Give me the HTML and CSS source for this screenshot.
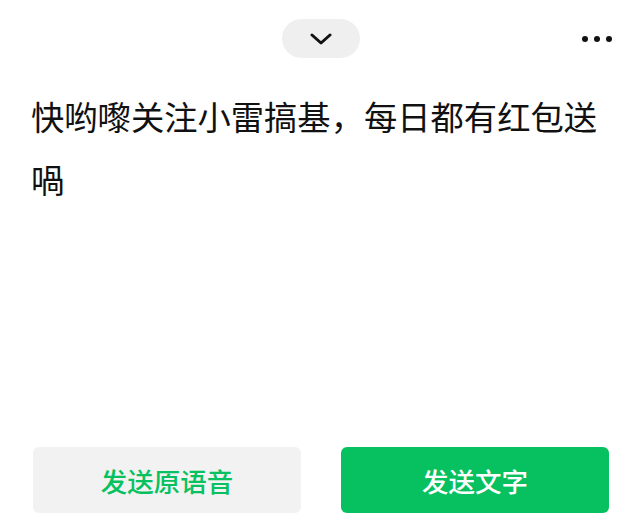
FILE: index.html
```html
<!DOCTYPE html>
<html lang="zh">
<head>
<meta charset="utf-8">
<link rel="stylesheet" href="styles.css">
</head>
<body>
<div class="page">
  <header class="top">
    <div class="spacer"></div>
    <button class="pill" aria-label="收起">
      <svg width="22" height="12" viewBox="0 0 22 12"><path d="M2 2 L11 10 L20 2" fill="none" stroke="#111" stroke-width="3" stroke-linecap="round" stroke-linejoin="round"/></svg>
    </button>
    <div class="more"><span class="dot"></span><span class="dot"></span><span class="dot"></span></div>
  </header>
  <main class="content">
    <p class="text">快哟嚟关注小雷搞基，每日都有红包送喎</p>
  </main>
  <footer class="actions">
    <button class="btn btn-grey">发送原语音</button>
    <button class="btn btn-green">发送文字</button>
  </footer>
</div>
</body>
</html>
```

FILE: styles.css
```css
html, body {
  margin: 0;
  padding: 0;
  background: #fff;
}
body {
  font-family: "Noto Sans CJK SC", "Noto Sans", sans-serif;
}
.page {
  width: 640px;
  height: 527px;
  display: flex;
  flex-direction: column;
  box-sizing: border-box;
}
.top {
  display: grid;
  grid-template-columns: 1fr auto 1fr;
  align-items: center;
  padding-top: 19px;
}
.pill {
  width: 78px;
  height: 39px;
  border: none;
  border-radius: 20px;
  background: #efefef;
  display: flex;
  align-items: center;
  justify-content: center;
  padding: 0;
  margin-left: 1px;
}
.pill svg { display: block; margin-top: 1px; }
.more {
  justify-self: end;
  display: flex;
  gap: 6px;
  padding-right: 28px;
}
.dot {
  width: 6px;
  height: 6px;
  border-radius: 50%;
  background: #111;
}
.content {
  flex: 1;
  padding: 0 28px 0 31px;
}
.text {
  margin: 26px 0 0;
  font-size: 33.3px;
  line-height: 63px;
  color: #111;
}
.actions {
  display: flex;
  gap: 40px;
  padding: 0 31px 14px 33px;
}
.btn {
  flex: 1;
  height: 66px;
  border: none;
  border-radius: 6px;
  font-family: "Noto Sans CJK SC", sans-serif;
  font-size: 26.5px;
  font-weight: 500;
  padding: 0;
}
.btn-grey {
  background: #f2f2f2;
  color: #07c160;
}
.btn-green {
  background: #07c160;
  color: #fff;
}
```
